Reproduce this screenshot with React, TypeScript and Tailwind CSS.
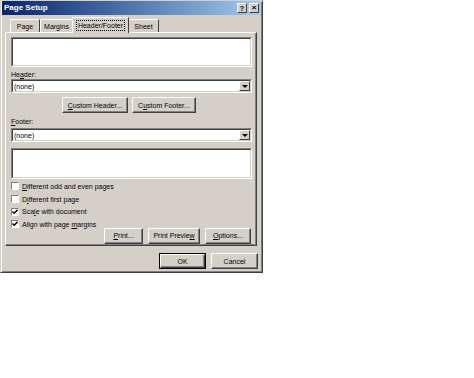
import React from "react";

const font = { fontFamily: '"Liberation Sans", Arial, sans-serif' };

const U = ({ children }: { children: React.ReactNode }) => <span className="underline underline-offset-[1px]">{children}</span>;

const Btn = ({ children, w, def }: { children: React.ReactNode; w: string; def?: boolean }) => (
  <div className={`${w} h-[16px] ${def ? "border border-black" : ""}`}>
    <div className="w-full h-full flex items-center justify-center bg-[#d4d0c8] border border-t-white border-l-white border-r-[#404040] border-b-[#404040] shadow-[inset_-1px_-1px_0_#808080] text-[7px] text-black leading-none">
      {children}
    </div>
  </div>
);

const Inset = ({ className, children }: { className: string; children?: React.ReactNode }) => (
  <div className={`${className} border border-t-[#808080] border-l-[#808080] border-r-white border-b-white`}>
    <div className="w-full h-full bg-white border border-t-[#404040] border-l-[#404040] border-r-[#d4d0c8] border-b-[#d4d0c8]">{children}</div>
  </div>
);

const Select = () => (
  <Inset className="w-[241px] h-[14px]">
    <div className="flex h-full items-center">
      <span className="flex-1 pl-[1px] text-[7px] leading-none text-black">(none)</span>
      <div className="w-[11px] h-full flex items-center justify-center bg-[#d4d0c8] border border-t-white border-l-white border-r-[#404040] border-b-[#404040]">
        <div className="w-0 h-0 border-l-[3px] border-r-[3px] border-t-[3px] border-l-transparent border-r-transparent border-t-black" />
      </div>
    </div>
  </Inset>
);

const Check = ({ checked, children }: { checked?: boolean; children: React.ReactNode }) => (
  <div className="flex items-center h-[12.7px] gap-[3px]">
    <div className="w-[8px] h-[8px] bg-white border border-t-[#808080] border-l-[#808080] border-r-white border-b-white flex items-center justify-center">
      {checked && (
        <svg width="6" height="6" viewBox="0 0 7 7">
          <path d="M0.5 3 L2.5 5 L6.5 1" stroke="black" strokeWidth="1.6" fill="none" />
        </svg>
      )}
    </div>
    <span className="text-[7px] leading-none text-black">{children}</span>
  </div>
);

const Tab = ({ label, active, w }: { label: React.ReactNode; active?: boolean; w: string }) => (
  <div
    className={`${w} ${active ? "h-[16px] -mx-[1px] z-10 bg-[#d4d0c8] -mb-[1px]" : "h-[13px]"} flex items-center justify-center border border-b-0 border-t-white border-l-white border-r-[#404040] text-[7px] leading-none text-black`}
  >
    {active ? <span className="border border-dotted border-black px-[1px] py-[1px]">{label}</span> : label}
  </div>
);

export default function App() {
  return (
    <div className="w-[474px] h-[378px] bg-white relative overflow-hidden" style={font}>
      <div className="w-[263px] h-[273px] bg-[#d4d0c8] border border-t-[#d4d0c8] border-l-[#d4d0c8] border-r-[#404040] border-b-[#404040] shadow-[inset_1px_1px_0_white,inset_-1px_-1px_0_#808080] px-[1px] flex flex-col">
        <div className="h-[14px] bg-gradient-to-r from-[#0a246a] to-[#a6caf0] flex items-center justify-between px-[2px]">
          <span className="text-[8px] font-bold text-white leading-none">Page Setup</span>
          <div className="flex gap-[2px]">
            <div className="w-[10px] h-[10px] bg-[#d4d0c8] border border-t-white border-l-white border-r-[#404040] border-b-[#404040] flex items-center justify-center text-[7px] font-bold leading-none text-black">?</div>
            <div className="w-[10px] h-[10px] bg-[#d4d0c8] border border-t-white border-l-white border-r-[#404040] border-b-[#404040] flex items-center justify-center text-[8px] font-bold leading-none text-black">×</div>
          </div>
        </div>
        <div className="flex items-end h-[17px] pl-[8px]">
          <Tab label="Page" w="w-[30px]" />
          <Tab label="Margins" w="w-[33px]" />
          <Tab label="Header/Footer" w="w-[57px]" active />
          <Tab label="Sheet" w="w-[31px]" />
        </div>
        <div className="ml-[3px] w-[252px] h-[214px] border border-t-white border-l-white border-r-[#404040] border-b-[#404040] shadow-[inset_-1px_-1px_0_#808080] px-[5px] pt-[4px] flex flex-col">
          <Inset className="w-[241px] h-[30px]" />
          <div className="h-[11px] flex items-end text-[7px] leading-none text-black">He<U>a</U>der:</div>
          <div className="mt-[1px]"><Select /></div>
          <div className="flex justify-center gap-[4px] mt-[4px] pr-[4px]">
            <Btn w="w-[66px]"><span><U>C</U>ustom Header...</span></Btn>
            <Btn w="w-[64px]"><span>C<U>u</U>stom Footer...</span></Btn>
          </div>
          <div className="h-[12px] flex items-end text-[7px] leading-none text-black"><U>F</U>ooter:</div>
          <div className="mt-[3px]"><Select /></div>
          <Inset className="w-[241px] h-[31px] mt-[6px]" />
          <div className="flex flex-col mt-[1px]">
            <Check><U>D</U>ifferent odd and even pages</Check>
            <Check>D<U>i</U>fferent first page</Check>
            <Check checked>Sca<U>l</U>e with document</Check>
            <Check checked>Align with page <U>m</U>argins</Check>
          </div>
          <div className="flex justify-end gap-[5px] -mt-[3px]">
            <Btn w="w-[39px]"><span><U>P</U>rint...</span></Btn>
            <Btn w="w-[52px]"><span>Print Previe<U>w</U></span></Btn>
            <Btn w="w-[46px]"><span><U>O</U>ptions...</span></Btn>
          </div>
        </div>
        <div className="flex justify-end gap-[5px] mt-[7px] pr-[3px]">
          <Btn w="w-[47px]" def>OK</Btn>
          <Btn w="w-[47px]">Cancel</Btn>
        </div>
      </div>
    </div>
  );
}
